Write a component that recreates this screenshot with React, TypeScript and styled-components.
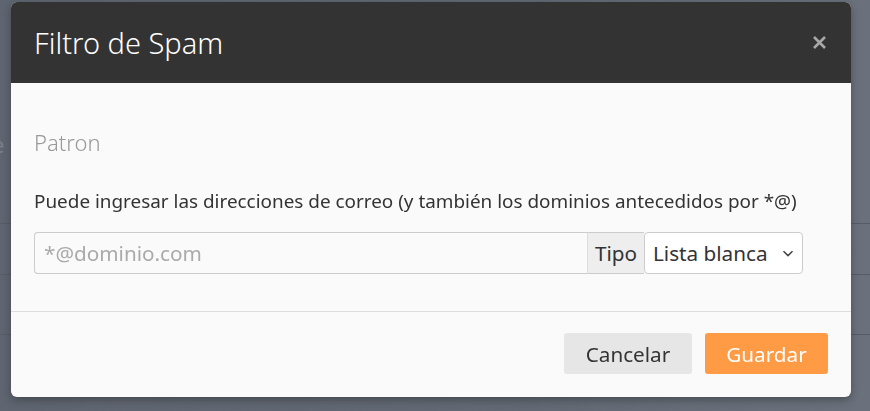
import React from 'react';
import styled, { createGlobalStyle } from 'styled-components';

const GlobalStyle = createGlobalStyle`
  html, body {
    margin: 0;
    padding: 0;
    height: 100%;
    overflow: hidden;
  }
  body {
    font-family: 'Noto Sans', 'Open Sans', sans-serif;
  }
`;

const Page = styled.div`
  width: 870px;
  height: 411px;
  background: linear-gradient(90deg, #5f6570 0%, #636974 60%, #6a717c 100%);
  display: flex;
  flex-direction: column;
`;

const PageRow = styled.div<{ $h: number; $line?: boolean }>`
  height: ${(p) => p.$h}px;
  flex-shrink: 0;
  border-bottom: 1px solid ${(p) => (p.$line ? '#575d68' : 'transparent')};
  color: #7a808a;
  font-size: 22px;
  display: flex;
  align-items: center;
  margin-left: -8px;
  overflow: hidden;
`;

const Overlay = styled.div`
  position: fixed;
  inset: 0;
  display: flex;
  align-items: flex-start;
  justify-content: flex-start;
  padding: 2px 0 0 11px;
`;

const Modal = styled.div`
  width: 840px;
  height: 395px;
  background: #fafafa;
  border-radius: 6px;
  overflow: hidden;
  display: flex;
  flex-direction: column;
  box-shadow: 0 3px 9px rgba(0, 0, 0, 0.3);
`;

const Header = styled.div`
  height: 81px;
  background: #333333;
  display: flex;
  align-items: center;
  justify-content: space-between;
  padding: 0 23px;
  flex-shrink: 0;
`;

const Title = styled.h4`
  margin: 0;
  font-size: 29px;
  font-weight: 300;
  color: #ffffff;
`;

const Close = styled.button`
  border: none;
  background: none;
  padding: 0;
  margin-right: 1px;
  width: 16px;
  height: 16px;
  display: flex;
  align-items: center;
  justify-content: center;
  cursor: pointer;
`;

const Body = styled.div`
  padding: 45px 23px 37px;
  border-bottom: 1px solid #dddddd;
`;

const Label = styled.div`
  font-size: 22px;
  line-height: 28px;
  font-weight: 300;
  color: #999999;
`;

const Help = styled.p`
  margin: 34px 0 20px;
  font-size: 18.9px;
  line-height: 22px;
  color: #333333;
  white-space: nowrap;
`;

const InputGroup = styled.div`
  display: flex;
  width: 769px;
  height: 42px;
`;

const TextInput = styled.input`
  flex: 1;
  min-width: 0;
  height: 42px;
  box-sizing: border-box;
  border: 1px solid #cccccc;
  border-right: none;
  border-radius: 4px 0 0 4px;
  background: #fafafa;
  padding: 0 9px;
  font-family: inherit;
  font-size: 20.7px;
  color: #333;
  outline: none;

  &::placeholder {
    color: #aaaaaa;
  }
`;

const Addon = styled.span`
  width: 57px;
  box-sizing: border-box;
  display: flex;
  align-items: center;
  justify-content: center;
  background: #eeeeee;
  border-top: 1px solid #cccccc;
  border-bottom: 1px solid #cccccc;
  border-left: 1px solid #dddddd;
  font-size: 20.7px;
  color: #333333;
`;

const SelectBox = styled.div`
  width: 159px;
  box-sizing: border-box;
  border: 1px solid #cccccc;
  border-radius: 4px;
  background: #ffffff;
  display: flex;
  align-items: center;
  justify-content: space-between;
  padding: 0 8px 0 8px;
  font-size: 20.7px;
  color: #333333;
`;

const Footer = styled.div`
  display: flex;
  justify-content: flex-end;
  gap: 13px;
  padding: 21px 23px 23px;
`;

const Button = styled.button<{ $primary?: boolean }>`
  height: 41px;
  width: ${(p) => (p.$primary ? 123 : 128)}px;
  border: none;
  border-radius: 3px;
  background: ${(p) => (p.$primary ? '#ff9a45' : '#e6e6e6')};
  color: ${(p) => (p.$primary ? '#ffffff' : '#333333')};
  font-family: inherit;
  font-size: 20.7px;
  cursor: pointer;
`;

function App() {
  return (
    <>
      <GlobalStyle />
      <Page>
        <PageRow $h={120} />
        <PageRow $h={46}>e</PageRow>
        <PageRow $h={55} $line />
        <PageRow $h={50} $line />
        <PageRow $h={59} $line />
      </Page>
      <Overlay>
        <Modal>
          <Header>
            <Title>Filtro de Spam</Title>
            <Close aria-label="Cerrar">
              <svg width="15" height="15" viewBox="0 0 15 15">
                <path d="M2 2 L13 13 M13 2 L2 13" stroke="#a8a8a8" strokeWidth="2.6" />
              </svg>
            </Close>
          </Header>
          <Body>
            <Label>Patron</Label>
            <Help>Puede ingresar las direcciones de correo (y también los dominios antecedidos por *@)</Help>
            <InputGroup>
              <TextInput placeholder="*@dominio.com" />
              <Addon>Tipo</Addon>
              <SelectBox>
                <span>Lista blanca</span>
                <svg width="12" height="7" viewBox="0 0 12 7">
                  <path d="M1.5 1.2 L6 5.6 L10.5 1.2" fill="none" stroke="#444" strokeWidth="1.5" />
                </svg>
              </SelectBox>
            </InputGroup>
          </Body>
          <Footer>
            <Button>Cancelar</Button>
            <Button $primary>Guardar</Button>
          </Footer>
        </Modal>
      </Overlay>
    </>
  );
}

export default App;
